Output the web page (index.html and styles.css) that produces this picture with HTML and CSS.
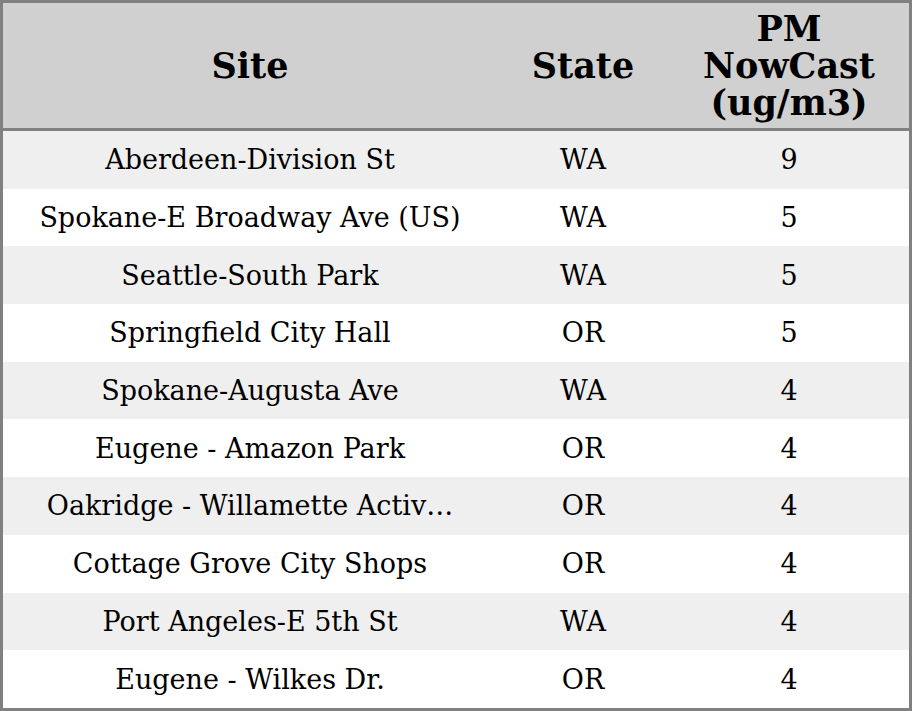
FILE: index.html
```html
<!DOCTYPE html>
<html>
<head>
<meta charset="utf-8">
<link rel="stylesheet" href="styles.css">
</head>
<body>
<table class="grid">
  <colgroup>
    <col class="c-site">
    <col class="c-state">
    <col class="c-pm">
  </colgroup>
  <thead>
    <tr class="head">
      <th>Site</th>
      <th>State</th>
      <th>PM<br>NowCast<br>(ug/m3)</th>
    </tr>
  </thead>
  <tbody>
    <tr><td>Aberdeen-Division St</td><td>WA</td><td>9</td></tr>
    <tr><td>Spokane-E Broadway Ave (US)</td><td>WA</td><td>5</td></tr>
    <tr><td>Seattle-South Park</td><td>WA</td><td>5</td></tr>
    <tr><td>Springfield City Hall</td><td>OR</td><td>5</td></tr>
    <tr><td>Spokane-Augusta Ave</td><td>WA</td><td>4</td></tr>
    <tr><td>Eugene - Amazon Park</td><td>OR</td><td>4</td></tr>
    <tr><td>Oakridge - Willamette Activ…</td><td>OR</td><td>4</td></tr>
    <tr><td>Cottage Grove City Shops</td><td>OR</td><td>4</td></tr>
    <tr><td>Port Angeles-E 5th St</td><td>WA</td><td>4</td></tr>
    <tr><td>Eugene - Wilkes Dr.</td><td>OR</td><td>4</td></tr>
  </tbody>
</table>
</body>
</html>
```

FILE: styles.css
```css
html, body {
  margin: 0;
  padding: 0;
  background: #ffffff;
}
.grid {
  width: 912px;
  height: 711px;
  border-collapse: separate;
  border-spacing: 0;
  border: 3px solid #808080;
  table-layout: fixed;
  font-family: "DejaVu Serif", serif;
  color: #000;
  box-sizing: border-box;
}
.c-site { width: 494px; }
.c-state { width: 172px; }
.c-pm { width: 240px; }
.head th {
  background: #d0d0d0;
  font-size: 35px;
  font-weight: bold;
  line-height: 37px;
  height: 125px;
  padding: 0;
  text-align: center;
  vertical-align: middle;
  border-bottom: 3px solid #808080;
}
tbody td {
  font-size: 27px;
  text-align: center;
  vertical-align: middle;
  padding: 0;
  height: 57.7px;
  white-space: nowrap;
}
tbody tr:nth-child(odd) td {
  background: #efefef;
}
```
